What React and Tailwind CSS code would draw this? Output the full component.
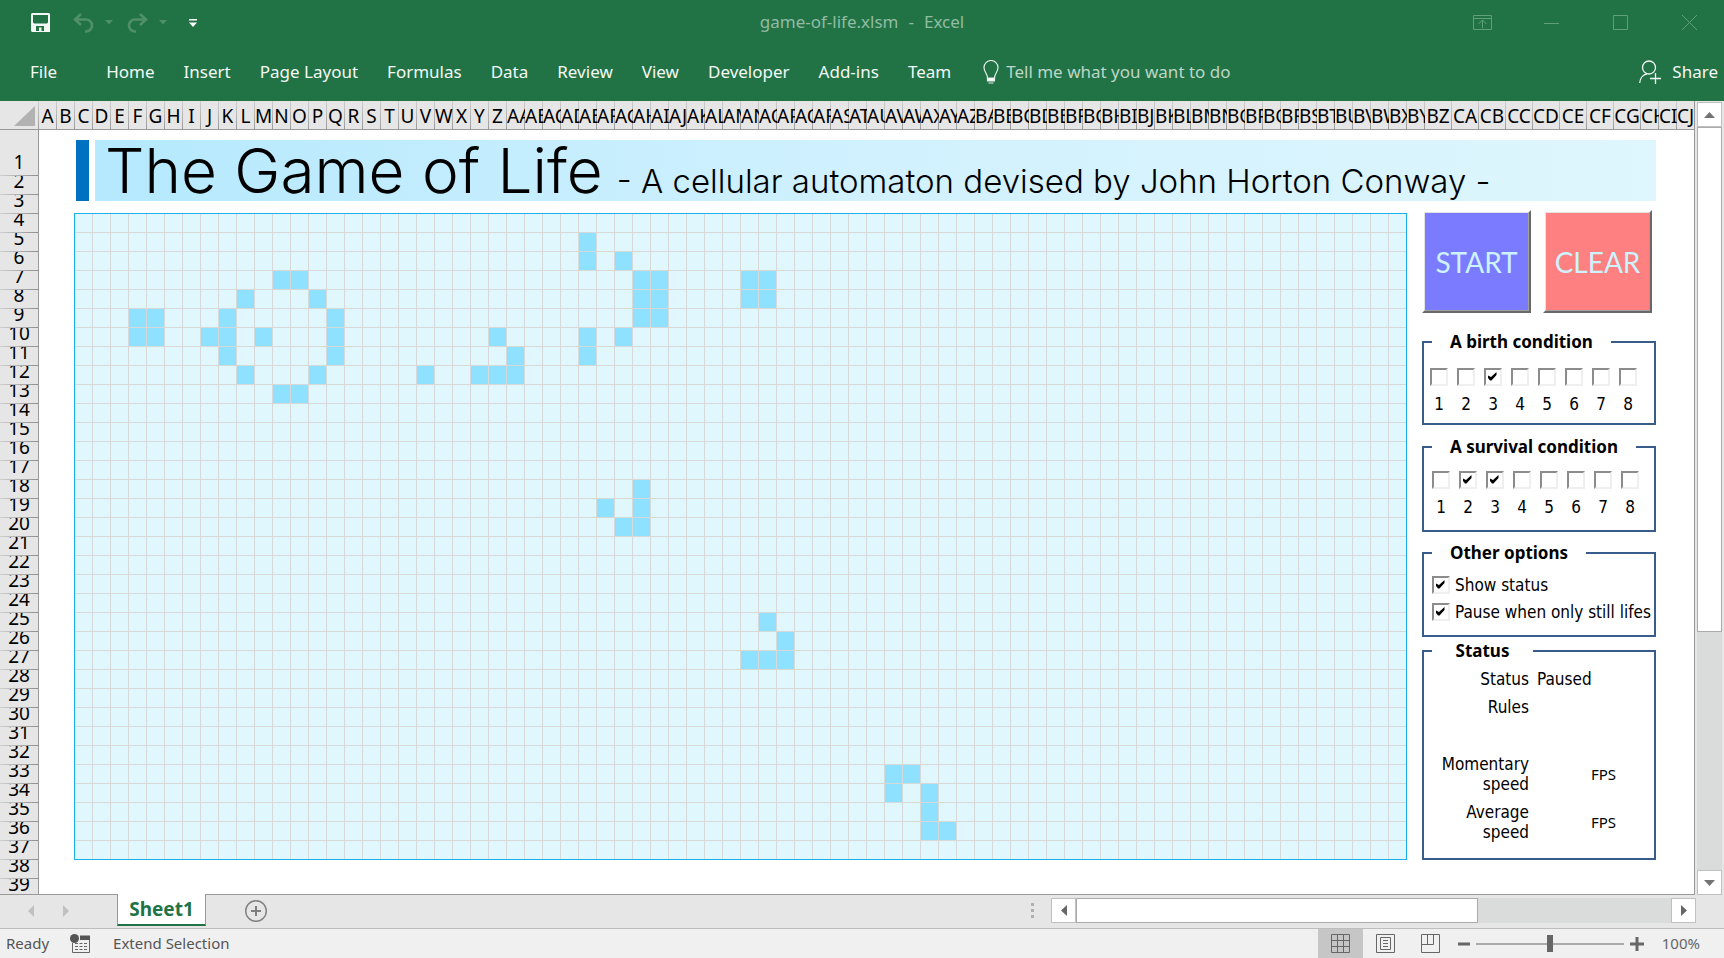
import React from "react";

const ribbonTabs = ["Home", "Insert", "Page Layout", "Formulas", "Data", "Review", "View", "Developer", "Add-ins", "Team"];

function columnName(n) {
  let name = "";
  while (n > 0) {
    name = String.fromCharCode(65 + ((n - 1) % 26)) + name;
    n = Math.floor((n - 1) / 26);
  }
  return name;
}

const columns = Array.from({ length: 88 }, (_, i) => ({
  name: columnName(i + 1),
  wide: i >= 77 && i <= 84,
}));

const rows = Array.from({ length: 39 }, (_, i) => i + 1);

/* Live cells: sheet row number -> column offsets from column C */
const liveCells = {
  5: [28],
  6: [28, 30],
  7: [11, 12, 31, 32, 37, 38],
  8: [9, 13, 31, 32, 37, 38],
  9: [3, 4, 8, 14, 31, 32],
  10: [3, 4, 7, 8, 10, 14, 23, 28, 30],
  11: [8, 14, 24, 28],
  12: [9, 13, 19, 22, 23, 24],
  13: [11, 12],
  18: [31],
  19: [29, 31],
  20: [30, 31],
  25: [38],
  26: [39],
  27: [37, 38, 39],
  33: [45, 46],
  34: [45, 47],
  35: [47],
  36: [47, 48],
};

function TitleBar() {
  return (
    <header className="flex h-[45px] shrink-0 items-center justify-between pr-[27px] pl-[31px]">
      <div className="flex flex-1 items-center">
        <button aria-label="Save">
          <svg width="19" height="19" viewBox="0 0 19 19" className="block">
            <path fill="#f4f8f5" fillRule="evenodd" d="M1 0H18L19 1V19H1L0 18V1ZM2 2V9.500L3 10.500H16L17 9.500V2ZM5 13V18H8V14.500H10.500V18H13V13Z" />
          </svg>
        </button>
        <button aria-label="Undo" className="ml-[23px]">
          <svg width="22" height="20" viewBox="0 0 22 20" fill="none" stroke="#4f9069" strokeWidth="2.600" className="block">
            <path d="M8 1L2 6.500L8 12M2.500 6.500H13A6 6 0 0 1 13 18.500H12" />
          </svg>
        </button>
        <button aria-label="Undo history" className="ml-[10px]">
          <svg width="8" height="5" className="block"><path d="M0 0H8L4 4.500Z" fill="#4f9069" /></svg>
        </button>
        <button aria-label="Redo" className="ml-[13px]">
          <svg width="22" height="20" viewBox="0 0 22 20" fill="none" stroke="#4f9069" strokeWidth="2.600" className="block">
            <path d="M14 1L20 6.500L14 12M19.500 6.500H9A6 6 0 0 0 9 18.500H10" />
          </svg>
        </button>
        <button aria-label="Redo history" className="ml-[11px]">
          <svg width="8" height="5" className="block"><path d="M0 0H8L4 4.500Z" fill="#4f9069" /></svg>
        </button>
        <button aria-label="Customize Quick Access Toolbar" className="ml-[22px]">
          <svg width="8" height="8" className="block"><path d="M0 0H8V1.500H0ZM0 3.500H8L4 8Z" fill="#fff" /></svg>
        </button>
      </div>
      <h1 className="flex gap-[10px] pr-1 pb-[2px] text-[17px] text-[#91bba3]">
        <span>game-of-life.xlsm</span>
        <span>-</span>
        <span>Excel</span>
      </h1>
      <div className="flex flex-1 items-center justify-end text-[#5f9f7b]">
        <button aria-label="Ribbon display options" className="mr-[52px]">
          <svg width="19" height="15" fill="none" stroke="currentColor" className="block">
            <path d="M0.500 0.500H18.500V14.500H0.500ZM0.500 3.500H18.500M9.500 13V5M5.500 9L9.500 5L13.500 9" />
          </svg>
        </button>
        <button aria-label="Minimize" className="mr-[54px]">
          <svg width="15" height="15" stroke="currentColor" className="block"><path d="M0 8.500H15" /></svg>
        </button>
        <button aria-label="Maximize" className="mr-[54px]">
          <svg width="15" height="15" fill="none" stroke="currentColor" className="block"><path d="M0.500 0.500H14.500V14.500H0.500Z" /></svg>
        </button>
        <button aria-label="Close">
          <svg width="15" height="15" stroke="currentColor" className="block"><path d="M0 0L15 15M15 0L0 15" /></svg>
        </button>
      </div>
    </header>
  );
}

function Ribbon() {
  return (
    <nav className="flex h-14 shrink-0 items-center overflow-hidden pr-[6px] pb-[3px] pl-[30px] text-[17px] text-[#f4f8f5]">
      <button className="mr-[49px]">File</button>
      <div className="flex gap-[29px]">
        {ribbonTabs.map((tab) => (
          <button key={tab} className="whitespace-nowrap">{tab}</button>
        ))}
      </div>
      <label className="ml-8 flex items-center gap-[7px]">
        <svg width="16" height="24" viewBox="0 0 16 24" fill="none" stroke="#e4efe8" strokeWidth="1.200" className="shrink-0">
          <path d="M4.500 18C4.500 14 1 12 1 7.500A7 7 0 0 1 15 7.500C15 12 11.500 14 11.500 18" />
          <path d="M4.500 18H11.500V21H4.500ZM5.500 23H10.500" fill="#fff" />
        </svg>
        <input aria-label="Tell me" placeholder="Tell me what you want to do" className="w-60 bg-transparent outline-none placeholder:text-[#bdd6c7]" />
      </label>
      <button className="ml-auto flex items-center gap-[11px]">
        <svg width="22" height="24" viewBox="0 0 22 24" fill="none" stroke="#f4f8f5" strokeWidth="1.300">
          <circle cx="10" cy="7.500" r="6.500" />
          <path d="M0.700 23C1 18 4 14.500 8 14M11 18.500H22M16.500 13V24" />
        </svg>
        Share
      </button>
    </nav>
  );
}

function CheckBox({ label, name, checked }) {
  return (
    <span className="grid size-[18px] shrink-0 place-items-center">
      <input
        type="checkbox"
        name={name}
        aria-label={label}
        defaultChecked={checked}
        className="peer size-[18px] appearance-none border-2 border-t-[#8c8c8c] border-r-[#efefef] border-b-[#efefef] border-l-[#8c8c8c] bg-white [grid-area:1/1]"
      />
      <svg width="12" height="12" viewBox="0 0 12 12" className="pointer-events-none invisible [grid-area:1/1] peer-checked:visible">
        <path d="M1 4.500L4 6L9.500 1V4L4.500 9.500H3L1 7Z" fill="#000" />
      </svg>
    </span>
  );
}

function Group({ title, className, children }) {
  return (
    <fieldset className={"min-w-0 border-2 border-[#385d8a] " + className}>
      <legend className="ml-2 px-[18px] font-['Noto_Sans',sans-serif] leading-[22px] font-bold">
        <span className="block min-w-[65px] text-center">{title}</span>
      </legend>
      {children}
    </fieldset>
  );
}

function Condition({ name, active, className }) {
  return (
    <div className={"flex gap-[9px] " + className}>
      {[1, 2, 3, 4, 5, 6, 7, 8].map((n) => (
        <label key={n} className="flex w-[18px] flex-col items-center gap-2 leading-5">
          <CheckBox name={name} label={name + " " + n} checked={active.includes(n)} />
          {n}
        </label>
      ))}
    </div>
  );
}

function ActionButton({ className, children }) {
  return (
    <button className="h-[103px] w-[109px] border-2 border-t-white border-r-[#696969] border-b-[#696969] border-l-white">
      <span className={"flex size-full items-center justify-center border border-t-[#e3e3e3] border-r-[#a0a0a0] border-b-[#a0a0a0] border-l-[#e3e3e3] font-[Lato,sans-serif] text-[28px] text-[#cdf3ff] " + className}>
        {children}
      </span>
    </button>
  );
}

function SidePanel() {
  return (
    <aside className="w-[234px] shrink-0 font-['DejaVu_Sans_Condensed','Noto_Sans',sans-serif] text-[17px] text-black">
      <div className="flex gap-3">
        <ActionButton className="bg-[#7b7bff]">START</ActionButton>
        <ActionButton className="bg-[#ff8080]">CLEAR</ActionButton>
      </div>
      <Group title="A birth condition" className="mt-[18px] pb-[9px]">
        <Condition name="Birth" active={[3]} className="pt-[15px] pl-[6px]" />
      </Group>
      <Group title="A survival condition" className="mt-[11px] pb-[13px]">
        <Condition name="Survival" active={[2, 3]} className="pt-[13px] pl-2" />
      </Group>
      <Group title="Other options" className="mt-[10px] pb-[14px]">
        <div className="flex flex-col gap-[9px] pt-3 pl-2 leading-[18px] whitespace-nowrap">
          <label className="flex items-center gap-[5px]">
            <CheckBox name="status" checked />
            Show status
          </label>
          <label className="flex items-center gap-[5px]">
            <CheckBox name="pause" checked />
            Pause when only still lifes
          </label>
        </div>
      </Group>
      <Group title="Status" className="mt-[3px] pb-4">
        <dl className="grid grid-cols-[105px_1fr] gap-2 pt-[7px] leading-5">
          <dt className="text-right">Status</dt>
          <dd>Paused</dd>
          <dt className="h-[49px] text-right">Rules</dt>
          <dd />
          <dt className="pl-4 text-right">Momentary speed</dt>
          <dd className="self-center pl-[54px] font-['Noto_Sans',sans-serif] text-[15px]">FPS</dd>
          <dt className="pl-4 text-right">Average speed</dt>
          <dd className="self-center pl-[54px] font-['Noto_Sans',sans-serif] text-[15px]">FPS</dd>
        </dl>
      </Group>
    </aside>
  );
}

function Board() {
  return (
    <div className="mt-[3px] grid h-[647px] w-[1333px] shrink-0 auto-rows-[19px] grid-cols-[repeat(74,18px)] grid-rows-[repeat(34,19px)] overflow-hidden border border-[#1bb0ea] bg-[#e0f7fe] bg-[linear-gradient(to_right,transparent_17px,#d8d8d8_17px),linear-gradient(to_bottom,transparent_18px,#d8d8d8_18px)] bg-[size:18px_19px]">
      {Object.entries(liveCells).flatMap(([row, cols]) =>
        cols.map((col) => (
          <span
            key={row + "-" + col}
            className="mr-px mb-px bg-[#8fe2ff]"
            style={{ gridRow: Number(row) - 3, gridColumn: col + 1 }}
          />
        ))
      )}
    </div>
  );
}

function ColumnHeaders() {
  return (
    <div className="flex h-[29px] shrink-0 overflow-hidden border-b border-[#999999] bg-[#e6e6e6]">
      <div className="flex w-[39px] shrink-0 justify-end bg-[linear-gradient(#cfcfcf,#9b9b9b)] bg-[size:1px_100%] bg-right bg-no-repeat pt-[5px] pr-1">
        <svg width="21" height="20"><path d="M21 0V20H0Z" fill="#b2b2b2" /></svg>
      </div>
      {columns.map(({ name, wide }) => (
        <div
          key={name}
          className={
            "flex shrink-0 items-center overflow-hidden bg-[linear-gradient(#cfcfcf,#9b9b9b)] bg-[size:1px_100%] bg-right bg-no-repeat pt-[2px] pr-px [justify-content:safe_center] " +
            (wide ? "w-[27px]" : "w-[18px]")
          }
        >
          {name}
        </div>
      ))}
    </div>
  );
}

function RowHeaders() {
  return (
    <div className="w-[39px] shrink-0 border-r border-[#999999] bg-[#e6e6e6]">
      {rows.map((n) => (
        <div
          key={n}
          className={
            "flex items-end justify-center overflow-hidden bg-[linear-gradient(to_right,#cfcfcf,#8f8f8f)] bg-[size:100%_1px] bg-bottom bg-no-repeat pb-px leading-[26px] " +
            (n === 1 ? "h-[46px]" : "h-[19px]")
          }
        >
          {n}
        </div>
      ))}
    </div>
  );
}

function Sheet() {
  return (
    <div className="flex min-w-0 flex-1 flex-col overflow-hidden border-r border-b border-[#999999] bg-white text-[19px] text-black">
      <ColumnHeaders />
      <div className="flex min-h-0 flex-1 overflow-hidden">
        <RowHeaders />
        <main className="pt-[10px] pl-[35px]">
          <div className="flex h-[61px] gap-[6px] pl-[2px]">
            <div className="w-[13px] bg-[#0070c0]" />
            <div className="flex flex-1 items-baseline bg-linear-to-r from-[#b5e9fd] via-[#d1f1fe] to-[#def6fd] pl-[10px] font-[Inter,sans-serif] font-light whitespace-nowrap">
              <h2 className="text-[62px] leading-[61px]">The Game of Life</h2>
              <p className="ml-[14px] text-[33px]">- A cellular automaton devised by John Horton Conway -</p>
            </div>
          </div>
          <div className="flex gap-[15px] pt-[9px]">
            <Board />
            <SidePanel />
          </div>
        </main>
      </div>
    </div>
  );
}

function VerticalScroll() {
  return (
    <div className="flex w-[29px] shrink-0 flex-col pt-px pr-[2px] pl-[2px]">
      <button aria-label="Scroll up" className="flex h-[25px] shrink-0 items-center justify-center border border-[#c0c0c0] bg-white">
        <svg width="11" height="6"><path d="M5.500 0L11 6H0Z" fill="#737373" /></svg>
      </button>
      <div className="flex flex-1 flex-col bg-[#dadcdb]">
        <div className="h-[68%] border border-[#ababab] bg-white" />
      </div>
      <button aria-label="Scroll down" className="flex h-[25px] shrink-0 items-center justify-center border border-[#c0c0c0] bg-white">
        <svg width="11" height="6"><path d="M5.500 6L11 0H0Z" fill="#737373" /></svg>
      </button>
    </div>
  );
}

function SheetTabs() {
  return (
    <div className="flex h-[34px] shrink-0 items-start border-b border-[#bdbdbd] pr-7 pl-7">
      <button aria-label="Previous sheet" className="mt-[10px]">
        <svg width="6" height="12" className="block"><path d="M6 0V12L0 6Z" fill="#c0c0c0" /></svg>
      </button>
      <button aria-label="Next sheet" className="mt-[10px] ml-[29px]">
        <svg width="6" height="12" className="block"><path d="M0 0V12L6 6Z" fill="#c0c0c0" /></svg>
      </button>
      <button className="-mt-px ml-12 h-8 w-[89px] border-x border-b-2 border-x-[#999999] border-b-[#217346] bg-white text-[19px] leading-7 font-bold text-[#217346]">
        Sheet1
      </button>
      <button aria-label="New sheet" className="mt-[5px] ml-[39px]">
        <svg width="22" height="22" fill="none" stroke="#7f7f7f" className="block">
          <circle cx="11" cy="11" r="10.300" strokeWidth="1.400" />
          <path d="M6 11H16M11 6V16" strokeWidth="2" />
        </svg>
      </button>
      <div className="mt-[3px] ml-auto flex h-[25px] items-center">
        <svg width="3" height="16" className="mr-[17px]"><path d="M0 0H3V3H0ZM0 6H3V9H0ZM0 12H3V15H0Z" fill="#b0b0b0" /></svg>
        <button aria-label="Scroll left" className="flex h-full w-[25px] items-center justify-center border border-[#c0c0c0] bg-white">
          <svg width="6" height="11"><path d="M6 0V11L0 5.500Z" fill="#666" /></svg>
        </button>
        <div className="flex h-full w-[595px] bg-[#dadcdb]">
          <div className="w-[402px] border border-[#ababab] bg-white" />
        </div>
        <button aria-label="Scroll right" className="flex h-full w-[25px] items-center justify-center border border-[#c0c0c0] bg-white">
          <svg width="6" height="11"><path d="M0 0V11L6 5.500Z" fill="#666" /></svg>
        </button>
      </div>
    </div>
  );
}

function StatusBar() {
  return (
    <footer className="flex h-[29px] shrink-0 items-center bg-[#f0f0f0] pr-6 pl-[6px] text-[15px] text-[#555555]">
      <span>Ready</span>
      <button aria-label="Record macro" className="ml-[21px]">
        <svg width="20" height="20" className="block">
          <path d="M2.500 9V18.500H19.500V5" fill="none" stroke="#666" />
          <path d="M10 1.500H20V6H10Z" fill="#555" />
          <circle cx="4.500" cy="4.500" r="4.500" fill="#555" />
          <path d="M5 9.500H17M5 12.500H17M5 15.500H17" stroke="#666" strokeDasharray="3 1.500" />
        </svg>
      </button>
      <span className="ml-[23px]">Extend Selection</span>
      <div className="ml-auto flex h-full items-center text-[#666666]">
        <button aria-label="Normal view" className="flex h-full w-[45px] items-center justify-center bg-[#c6c6c6]">
          <svg width="19" height="19" fill="none" stroke="currentColor"><path d="M0.500 0.500H18.500V18.500H0.500ZM6.500 0V19M12.500 0V19M0 6.500H19M0 12.500H19" /></svg>
        </button>
        <button aria-label="Page layout view" className="flex h-full w-[45px] items-center justify-center">
          <svg width="19" height="19" fill="none" stroke="currentColor"><path d="M0.500 0.500H18.500V18.500H0.500ZM4.500 3.500H14.500V15.500H4.500ZM7 6.500H12M7 9.500H12M7 12.500H12" /></svg>
        </button>
        <button aria-label="Page break preview" className="flex h-full w-[45px] items-center justify-center">
          <svg width="19" height="19" fill="none" stroke="currentColor"><path d="M0.500 0.500H18.500V18.500H0.500ZM0.500 10.500H12.500V0.500M6.500 0.500V10.500" /></svg>
        </button>
        <button aria-label="Zoom out" className="ml-[5px]">
          <svg width="12" height="14" className="block"><path d="M0 7H12" stroke="#666" strokeWidth="3" /></svg>
        </button>
        <input
          type="range"
          aria-label="Zoom"
          defaultValue="50"
          className="mx-[6px] h-[18px] w-[148px] appearance-none bg-[linear-gradient(#aaa,#aaa)] bg-[size:100%_2px] bg-center bg-no-repeat [&::-webkit-slider-thumb]:h-[17px] [&::-webkit-slider-thumb]:w-[6px] [&::-webkit-slider-thumb]:appearance-none [&::-webkit-slider-thumb]:bg-[#666]"
        />
        <button aria-label="Zoom in">
          <svg width="14" height="14" className="block"><path d="M0 7H14M7 0V14" stroke="#666" strokeWidth="3" /></svg>
        </button>
        <button className="ml-[18px]">100%</button>
      </div>
    </footer>
  );
}

export default function App() {
  return (
    <div className="flex h-screen flex-col overflow-hidden bg-[#e6e6e6] font-['Noto_Sans',sans-serif]">
      <div className="bg-[#217346]">
        <TitleBar />
        <Ribbon />
      </div>
      <div className="flex min-h-0 flex-1">
        <Sheet />
        <VerticalScroll />
      </div>
      <SheetTabs />
      <StatusBar />
    </div>
  );
}
